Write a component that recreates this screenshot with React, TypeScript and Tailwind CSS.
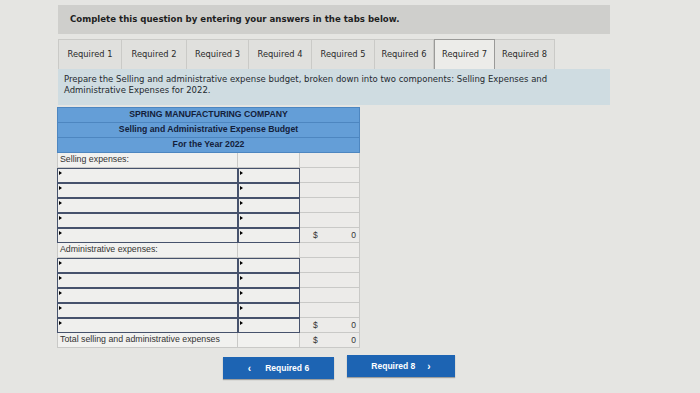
import React from "react";

const tabs = [
  { label: "Required 1", w: "w-[64px]" },
  { label: "Required 2", w: "w-[65px]" },
  { label: "Required 3", w: "w-[62px]" },
  { label: "Required 4", w: "w-[63px]" },
  { label: "Required 5", w: "w-[63px]" },
  { label: "Required 6", w: "w-[59px]" },
  { label: "Required 7", w: "w-[61px]", active: true },
  { label: "Required 8", w: "w-[60px]" },
];

const Marker = () => (
  <span className="absolute left-[1px] top-[2px] w-0 h-0 border-y-[2px] border-y-transparent border-l-[3px] border-l-black" />
);

const InputCell = () => (
  <div className="relative h-[15px] bg-[#efefed] border-[1.5px] border-[#46526c]">
    <Marker />
  </div>
);

const PlainCell = ({ children }: { children?: React.ReactNode }) => (
  <div className="h-[15px] bg-[#ecebe9] border-r border-b border-[#c9c9c7] flex items-center justify-between pl-[7px] pr-[3px] text-[8.5px] text-[#333]">
    {children}
  </div>
);

const LabelRow = ({ text, last }: { text: string; last?: React.ReactNode }) => (
  <div className="grid grid-cols-[181px_62px_60px] h-[15px]">
    <div className="bg-[#f1f1ef] border-l border-b border-r border-[#c9c9c7] flex items-center pl-[2px] text-[8.8px] text-[#333] whitespace-nowrap">
      {text}
    </div>
    <div className="bg-[#f1f1ef] border-b border-r border-[#c9c9c7]" />
    <div className="bg-[#ecebe9] border-b border-r border-[#c9c9c7] flex items-center justify-between pl-[7px] pr-[3px] text-[8.5px] text-[#333]">
      {last}
    </div>
  </div>
);

const InputRow = ({ total }: { total?: boolean }) => (
  <div className="grid grid-cols-[181px_62px_60px] h-[15px]">
    <InputCell />
    <InputCell />
    <PlainCell>
      {total && (
        <>
          <span className="pl-[6px]">$</span>
          <span>0</span>
        </>
      )}
    </PlainCell>
  </div>
);

export default function App() {
  return (
    <div className="w-[700px] h-[393px] overflow-hidden bg-[#e5e5e2] pl-[58px] pt-[5px] font-['DejaVu_Sans',sans-serif]">
      <div className="w-[552px] h-[29px] bg-[#cfcfcc] flex items-center pl-[12px] text-[8.6px] font-bold text-[#1e1e1e]">
        Complete this question by entering your answers in the tabs below.
      </div>

      <div className="flex mt-[5px] h-[30px] w-[552px]">
        {tabs.map((t) => (
          <div
            key={t.label}
            className={`${t.w} flex items-center justify-center text-[8.3px] text-[#2a2a2a] ${
              t.active
                ? "bg-[#ecece9] border-t border-x border-[#9a9a98]"
                : "bg-[#e0e0dd] border-r border-t border-[#cacac7] first:border-l"
            }`}
          >
            {t.label}
          </div>
        ))}
      </div>

      <div className="w-[552px] h-[36px] bg-[#cfdce1] pl-[6px] pt-[5px] text-[8.5px] leading-[10.5px] text-[#1f2a30] whitespace-nowrap">
        Prepare the Selling and administrative expense budget, broken down into two components: Selling Expenses and
        <br />
        Administrative Expenses for 2022.
      </div>

      <div className="mt-[2px] -ml-px w-[303px] font-['Liberation_Sans',sans-serif]">
        <div className="bg-[#649ed7] border border-[#4d86c0] text-[8.7px] font-bold text-[#13203a]">
          <div className="h-[15px] flex items-center justify-center border-b border-[#4d86c0]">
            SPRING MANUFACTURING COMPANY
          </div>
          <div className="h-[15px] flex items-center justify-center border-b border-[#4d86c0]">
            Selling and Administrative Expense Budget
          </div>
          <div className="h-[14px] flex items-center justify-center">For the Year 2022</div>
        </div>

        <LabelRow text="Selling expenses:" />
        <InputRow />
        <InputRow />
        <InputRow />
        <InputRow />
        <InputRow total />

        <LabelRow text="Administrative expenses:" />
        <InputRow />
        <InputRow />
        <InputRow />
        <InputRow />
        <InputRow total />

        <LabelRow
          text="Total selling and administrative expenses"
          last={
            <>
              <span className="pl-[6px]">$</span>
              <span>0</span>
            </>
          }
        />
      </div>

      <div className="flex items-start mt-[8px] pl-[165px] gap-[13px] font-['Liberation_Sans',sans-serif]">
        <button className="w-[111px] h-[22px] mt-[1px] bg-[#1d64b3] text-white text-[8.5px] font-bold flex items-center justify-center gap-[14px] shadow-[0_1px_1px_rgba(0,0,0,0.3)]">
          <span className="text-[10px]">‹</span>
          <span>Required 6</span>
        </button>
        <button className="w-[108px] h-[22px] -mt-[1px] bg-[#1d64b3] text-white text-[8.5px] font-bold flex items-center justify-center gap-[12px] shadow-[0_1px_1px_rgba(0,0,0,0.3)]">
          <span>Required 8</span>
          <span className="text-[10px]">›</span>
        </button>
      </div>
    </div>
  );
}
